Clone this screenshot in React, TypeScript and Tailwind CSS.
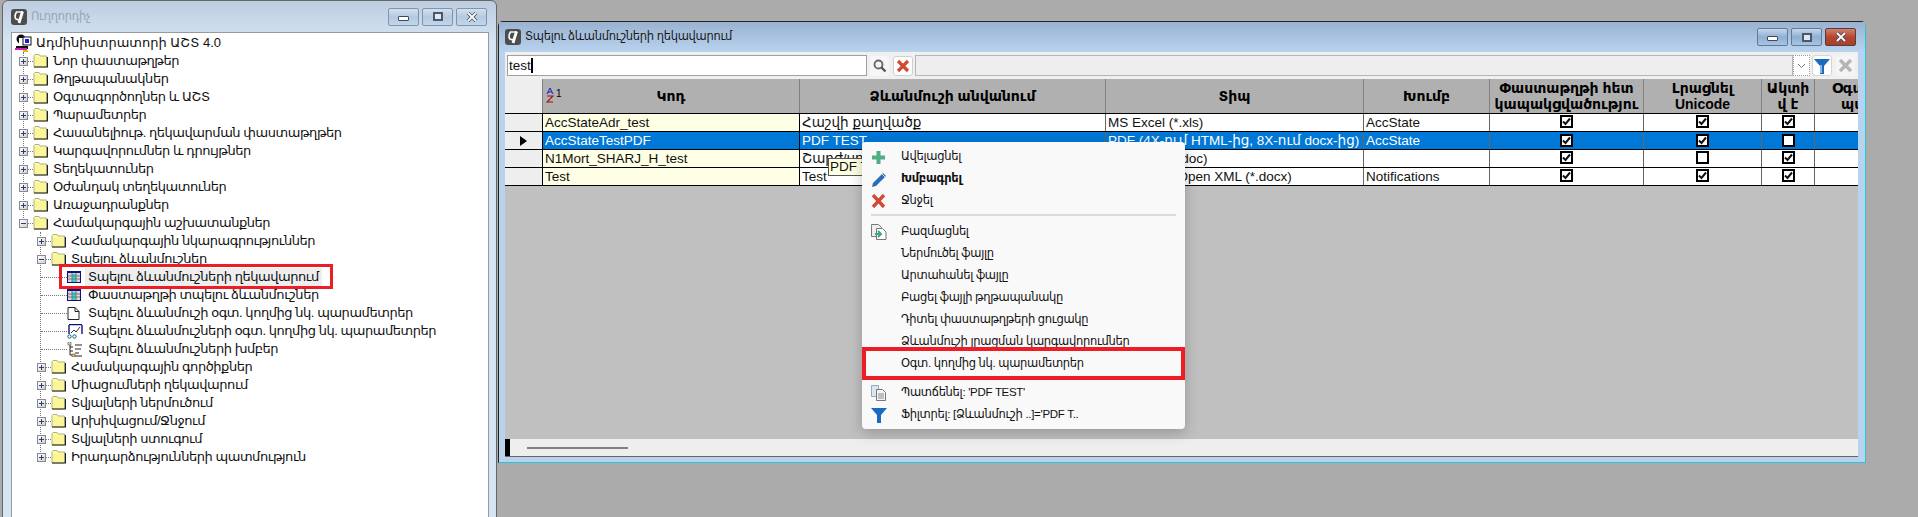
import React from 'react';

const Logo = () => (
  <svg width="16" height="16" viewBox="0 0 16 16" className="shrink-0">
    <rect width="16" height="16" rx="3" fill="#4d4d4d" />
    <path d="M5.500 3C3 7 3.500 11.500 8 10.500" stroke="#fff" strokeWidth="1.6" fill="none" />
    <path d="M5 3h7" stroke="#fff" strokeWidth="1.4" />
    <path d="M11.500 2.500L8 14" stroke="#fff" strokeWidth="2.8" />
  </svg>
);

const WinButtons = ({ active }: { active?: boolean }) => (
  <div className="flex gap-[3px]">
    {['min', 'max', 'close'].map((b) => (
      <div
        key={b}
        className={
          'w-[31px] h-[18px] rounded-[2px] border flex items-center justify-center ' +
          (active && b === 'close'
            ? 'border-[#5a3a3a] bg-gradient-to-b from-[#cf7f70] via-[#b8452f] to-[#a8402c]'
            : active
              ? 'border-[#5f7a9a] bg-gradient-to-b from-[#c6d8ec] via-[#8fb0d2] to-[#a8c4e2]'
              : 'border-[#8094ac] bg-gradient-to-b from-[#d4e0ee] via-[#b4c9e0] to-[#c2d6ea]')
        }
      >
        {b === 'min' && <div className="w-[11px] h-[5px] mt-[3px] border border-[#3c4a5c] bg-white rounded-[1px]" />}
        {b === 'max' && <div className="w-[10px] h-[9px] border-2 border-[#4a586a] bg-[#dfe8f2]" />}
        {b === 'close' && (
          <svg width="12" height="10" viewBox="0 0 12 10">
            <path d="M2 1l8 8M10 1l-8 8" stroke="#3c4a5c" strokeWidth="3.4" />
            <path d="M2 1l8 8M10 1l-8 8" stroke="#fff" strokeWidth="1.8" />
          </svg>
        )}
      </div>
    ))}
  </div>
);

const Folder = () => (
  <svg width="15" height="14" viewBox="0 0 15 14" className="shrink-0">
    <path d="M1 3V1.500L2 .5h4L7 2h6.500v11H1z" fill="#ffff99" stroke="#9a9a7a" strokeWidth="0.8" />
    <rect x="2" y="3" width="11" height="9" fill="#fdf59a" />
    <path d="M1 13h13.500V3" fill="none" stroke="#222" strokeWidth="1.2" />
  </svg>
);

const Expander = ({ open }: { open?: boolean }) => (
  <div className="w-[9px] h-[9px] shrink-0 border border-[#8a8a8a] bg-gradient-to-br from-white to-[#d0d0d0] flex items-center justify-center relative">
    <div className="w-[5px] h-px bg-[#25407a]" />
    {!open && <div className="absolute w-px h-[5px] bg-[#25407a]" />}
  </div>
);

const TableIcon = () => (
  <svg width="14" height="12" viewBox="0 0 14 12" className="shrink-0">
    <rect width="14" height="12" fill="#10107c" />
    <rect x="1" y="2" width="12" height="9" fill="#d8d8d8" />
    <rect x="5" y="3" width="4" height="8" fill="#22dede" />
    <path d="M1 5h12M1 8h12M5 2v9M9 2v9" stroke="#777" strokeWidth="1" />
  </svg>
);

const DocIcon = () => (
  <svg width="13" height="13" viewBox="0 0 13 13" className="shrink-0">
    <path d="M1 .5h7l4 4v8H1zM8 .5v4h4" fill="#fff" stroke="#222" />
  </svg>
);

const ChartIcon = () => (
  <svg width="16" height="15" viewBox="0 0 16 15" className="shrink-0">
    <path d="M2 .5h13M2 1v9M15 1v9" stroke="#10107c" strokeWidth="1.4" fill="none" />
    <path d="M4 9l3-3 2 2 4-5" stroke="#333" fill="none" />
    <circle cx="2.500" cy="12.500" r="1.700" fill="#fff" stroke="#167" />
    <circle cx="7.500" cy="12.500" r="1.700" fill="#fff" stroke="#167" />
  </svg>
);

const ListIcon = () => (
  <svg width="16" height="15" viewBox="0 0 16 15" className="shrink-0">
    <path d="M3 1v12M3 5h3M3 9h3M3 13h3M8 3h7M8 7h6M8 11h4M8 14h7" stroke="#222" fill="none" />
    <rect x="1" y="0" width="3" height="3" fill="#e8d98a" stroke="#555" strokeWidth="0.6" />
    <rect x="5" y="12" width="3" height="3" fill="#e8c020" stroke="#555" strokeWidth="0.6" />
  </svg>
);

const RootIcon = () => (
  <svg width="17" height="18" viewBox="0 0 17 18" className="shrink-0">
    <circle cx="6" cy="5" r="4.500" fill="#111" />
    <rect x="4" y="4" width="5" height="7" fill="#fff" />
    <rect x="8" y="3" width="8" height="8" fill="#fff" stroke="#111" />
    <rect x="10" y="5" width="4" height="4" fill="#1a1ae0" />
    <rect x="1" y="12" width="12" height="3" fill="#111" />
    <rect x="0" y="14" width="12" height="2" fill="#d020c0" />
    <rect x="8" y="16" width="5" height="2" fill="#e0c000" />
  </svg>
);

type TreeRow = { label: string; level: 1 | 2 | 3; open?: boolean; icon?: React.ReactNode; selected?: boolean };

const treeRows: TreeRow[] = [
  { label: 'Նոր փաստաթղթեր', level: 1 },
  { label: 'Թղթապանակներ', level: 1 },
  { label: 'Օգտագործողներ և ԱՇՏ', level: 1 },
  { label: 'Պարամետրեր', level: 1 },
  { label: 'Հասանելիութ. ղեկավարման փաստաթղթեր', level: 1 },
  { label: 'Կարգավորումներ և դրույթներ', level: 1 },
  { label: 'Տեղեկատուներ', level: 1 },
  { label: 'Օժանդակ տեղեկատուներ', level: 1 },
  { label: 'Առաջադրանքներ', level: 1 },
  { label: 'Համակարգային աշխատանքներ', level: 1, open: true },
  { label: 'Համակարգային նկարագրություններ', level: 2 },
  { label: 'Տպելու ձևանմուշներ', level: 2, open: true },
  { label: 'Տպելու ձևանմուշների ղեկավարում', level: 3, icon: <TableIcon />, selected: true },
  { label: 'Փաստաթղթի տպելու ձևանմուշներ', level: 3, icon: <TableIcon /> },
  { label: 'Տպելու ձևանմուշի օգտ. կողմից նկ. պարամետրեր', level: 3, icon: <DocIcon /> },
  { label: 'Տպելու ձևանմուշների օգտ. կողմից նկ. պարամետրեր', level: 3, icon: <ChartIcon /> },
  { label: 'Տպելու ձևանմուշների խմբեր', level: 3, icon: <ListIcon /> },
  { label: 'Համակարգային գործիքներ', level: 2 },
  { label: 'Միացումների ղեկավարում', level: 2 },
  { label: 'Տվյալների ներմուծում', level: 2 },
  { label: 'Արխիվացում/Ջնջում', level: 2 },
  { label: 'Տվյալների ստուգում', level: 2 },
  { label: 'Իրադարձությունների պատմություն', level: 2 },
];

const Tree = () => (
  <div className="relative h-full pt-px text-[13px] leading-[18px] text-[#111] tracking-[-0.45px]">
    <div className="absolute left-[11px] top-[19px] h-[172px] border-l border-dotted border-[#777]" />
    <div className="absolute left-[28px] top-[199px] h-[226px] border-l border-dotted border-[#777]" />
    <div className="flex items-center h-[18px] pl-[3px] gap-[4px]">
      <RootIcon />
      <span className="tracking-normal">Ադմինիստրատորի ԱՇՏ 4.0</span>
    </div>
    {treeRows.map((r) => (
      <div
        key={r.label}
        className={
          'relative flex items-center h-[18px] whitespace-nowrap ' +
          (r.level === 1 ? 'pl-[7px]' : r.level === 2 ? 'pl-[25px]' : 'pl-[29px]')
        }
      >
        {r.level < 3 ? (
          <>
            <Expander open={r.open} />
            <div className="w-[5px] shrink-0 border-t border-dotted border-[#777]" />
            <Folder />
            <span className="ml-[5px]">{r.label}</span>
          </>
        ) : (
          <>
            <div className="w-[26px] shrink-0 border-t border-dotted border-[#777]" />
            <div className="w-[16px] shrink-0 flex justify-start">{r.icon}</div>
            <span className={'ml-[2px] px-[3px] ' + (r.selected ? 'bg-[#eeeeee]' : '')}>{r.label}</span>
          </>
        )}
      </div>
    ))}
  </div>
);

const Check = ({ on, up }: { on: boolean; up?: boolean }) => (
  <div
    className={
      'w-[13px] h-[13px] border-2 border-black bg-white flex items-center justify-center ' +
      (up ? '-mt-[3px]' : '')
    }
  >
    {on && (
      <svg width="9" height="9" viewBox="0 0 9 9">
        <path d="M1 4.500l2.500 2.500L8 1.500" stroke="#111" strokeWidth="2" fill="none" />
      </svg>
    )}
  </div>
);

const gridCols = 'grid grid-cols-[38px_257px_306px_258px_126px_154px_118px_53px_43px]';

const rows = [
  { code: 'AccStateAdr_test', name: 'Հաշվի քաղվածք', type: 'MS Excel (*.xls)', group: 'AccState', c: [true, true, true] },
  { code: 'AccStateTestPDF', name: 'PDF TEST', type: 'PDF (4X-ում HTML-ից, 8X-ում docx-ից)', group: 'AccState', c: [true, true, false], sel: true },
  { code: 'N1Mort_SHARJ_H_test', name: 'Շարժ/սրթ հաշվետվություն', type: 'MS Word (*.doc)', group: '', c: [true, false, true] },
  { code: 'Test', name: 'Test', type: 'Word 2007 Open XML (*.docx)', group: 'Notifications', c: [true, true, true] },
];

const headCell =
  'border-r border-[#808080] bg-[#b0b0b0] flex items-center justify-center text-center font-bold leading-[16px] overflow-hidden whitespace-nowrap text-black';

const Grid = () => (
  <div className="text-[13.500px] text-[#111] w-[1353px]">
    <div className={gridCols + ' h-[35px] border-b border-black text-[14px]'}>
      <div className="bg-[#eeeeee] border-r border-[#808080]" />
      <div className={headCell + ' relative'}>
        <div className="absolute left-[3px] top-[8px] flex items-start">
          <svg width="8" height="16" viewBox="0 0 8 16">
            <path d="M1 7l3-6 3 6M2 5h4" stroke="#1a1ad0" fill="none" />
            <path d="M1 9h6l-6 6h6" stroke="#a01010" fill="none" strokeWidth="1.2" />
          </svg>
          <span className="ml-[2px] text-[10px] font-normal leading-[14px]">1</span>
        </div>
        Կոդ
      </div>
      <div className={headCell}>Ձևանմուշի անվանում</div>
      <div className={headCell}>Տիպ</div>
      <div className={headCell}>Խումբ</div>
      <div className={headCell}>Փաստաթղթի հետ<br />կապակցվածությու</div>
      <div className={headCell}>Լրացնել<br />Unicode</div>
      <div className={headCell}>Ակտի<br />վ է</div>
      <div className="bg-[#b0b0b0] font-bold leading-[16px] overflow-hidden whitespace-nowrap pl-[17px] pt-px text-black">
        Օգտ. կող<br /><span className="pl-[9px]">պար</span>
      </div>
    </div>
    {rows.map((r, i) => {
      const cell =
        'px-[2px] border-r border-[#666666] overflow-hidden whitespace-nowrap leading-[17px] ' +
        (r.sel ? 'bg-[#0078d7] text-white ' : 'bg-white ');
      return (
        <div key={r.code} className={gridCols + ' h-[18px] border-b border-black'}>
          <div className="bg-[#eeeeee] border-r border-black flex items-center justify-center">
            {r.sel && <div className="w-0 h-0 border-y-[5px] border-y-transparent border-l-[7px] border-l-black" />}
          </div>
          <div className={'px-[2px] border-r border-black leading-[17px] ' + (r.sel ? 'bg-[#0078d7] text-white' : 'bg-[#ffffe5]')}>
            {r.code}
          </div>
          <div className={cell}>{r.name}</div>
          <div className={cell}>{r.type}</div>
          <div className={cell}>{r.group}</div>
          {r.c.map((on, k) => (
            <div key={k} className={cell + 'flex items-center justify-center'}>
              <Check on={on} up={i !== 1} />
            </div>
          ))}
          <div className={r.sel ? 'bg-[#0078d7]' : 'bg-white'} />
        </div>
      );
    })}
  </div>
);

const Toolbar = () => (
  <div className="flex items-center h-[27px] bg-[#f0f0f0] pl-[2px]">
    <div className="w-[360px] h-[21px] bg-white border border-[#a0a0a0] text-[13.500px] leading-[19px] pl-[1px] flex items-center text-[#111]">
      test<div className="w-[2px] h-[15px] bg-black" />
    </div>
    <div className="ml-[3px] w-[19px] h-[20px] bg-[#f6f6f6] rounded-[3px] flex items-center justify-center">
      <svg width="14" height="14" viewBox="0 0 14 14">
        <circle cx="5.500" cy="5.500" r="4" fill="none" stroke="#666" strokeWidth="1.8" />
        <path d="M8.500 8.500l4 4" stroke="#555" strokeWidth="2.4" />
      </svg>
    </div>
    <div className="ml-[4px] w-[20px] h-[20px] bg-white border border-[#cfcfcf] rounded-[3px] flex items-center justify-center">
      <svg width="14" height="14" viewBox="0 0 14 14">
        <path d="M2 2l10 10M12 2L2 12" stroke="#d24a32" strokeWidth="3.2" />
      </svg>
    </div>
    <div className="ml-[2px] w-[878px] h-[21px] bg-[#eeeeee] border border-[#b5b5b5]" />
    <div className="w-[17px] h-[21px] bg-white border border-dotted border-[#999] flex items-center justify-center">
      <svg width="9" height="6" viewBox="0 0 9 6">
        <path d="M1 1l3.500 3.500L8 1" stroke="#777" fill="none" />
      </svg>
    </div>
    <div className="ml-[2px] w-[20px] h-[21px] bg-white border border-[#d5d5d5] rounded-[3px] flex items-center justify-center">
      <svg width="16" height="16" viewBox="0 0 16 16">
        <path d="M0 1h16L10 8v8H6V8z" fill="#1a6bc0" />
        <path d="M7 7v8" stroke="#fff" strokeWidth="1" />
      </svg>
    </div>
    <div className="ml-[3px] w-[20px] h-[21px] bg-[#f4f4f4] rounded-[3px] flex items-center justify-center">
      <svg width="15" height="15" viewBox="0 0 15 15">
        <path d="M2 2l11 11M13 2L2 13" stroke="#b5b5b5" strokeWidth="3.4" />
      </svg>
    </div>
  </div>
);

const menuGreenPlus = (
  <svg width="15" height="15" viewBox="0 0 15 15">
    <path d="M7.500 1v13M1 7.500h13" stroke="#4fae84" strokeWidth="4" />
  </svg>
);
const menuPencil = (
  <svg width="17" height="17" viewBox="0 0 17 17">
    <path d="M1 16l1-4L12 2l3 3L5 15z" fill="#2a6ebb" />
    <path d="M11 3l3 3" stroke="#fff" strokeWidth="0.8" />
  </svg>
);
const menuX = (
  <svg width="15" height="14" viewBox="0 0 15 14">
    <path d="M2 1l11 12M13 1L2 13" stroke="#cf4a35" strokeWidth="3.4" />
  </svg>
);
const menuDup = (
  <svg width="16" height="16" viewBox="0 0 16 16">
    <path d="M.5 2.500V.5h7l3 3v9H.5z" fill="#eee" stroke="#777" />
    <path d="M5.500 4.500h6l3.500 3.500v7.500h-9.500z" fill="#fff" stroke="#777" />
    <path d="M4 10h5M7 7l3 3-3 3" stroke="#3fa878" strokeWidth="2" fill="none" />
  </svg>
);
const menuCopy = (
  <svg width="16" height="16" viewBox="0 0 16 16">
    <path d="M.5.5h7v11h-7z" fill="#dbe6f2" stroke="#9aa8b8" />
    <path d="M5.500 4.500h6l3 3v8h-9z" fill="#f4f4f4" stroke="#777" />
    <path d="M7 9h6M7 11h6M7 13h6" stroke="#8a8a8a" />
  </svg>
);
const menuFilter = (
  <svg width="16" height="16" viewBox="0 0 16 16">
    <path d="M0 1h16L10 8v8H6V8z" fill="#1a6bc0" />
  </svg>
);

type MenuItem = { label?: string; icon?: React.ReactNode; bold?: boolean; sep?: 'line' | 'gap' };

const menuItems: MenuItem[] = [
  { label: 'Ավելացնել', icon: menuGreenPlus },
  { label: 'Խմբագրել', icon: menuPencil, bold: true },
  { label: 'Ջնջել', icon: menuX },
  { sep: 'line' },
  { label: 'Բազմացնել', icon: menuDup },
  { label: 'Ներմուծել ֆայլը' },
  { label: 'Արտահանել ֆայլը' },
  { label: 'Բացել ֆայլի թղթապանակը' },
  { label: 'Դիտել փաստաթղթերի ցուցակը' },
  { label: 'Ձևանմուշի լրացման կարգավորումներ' },
  { label: 'Օգտ. կողմից նկ. պարամետրեր' },
  { sep: 'gap' },
  { label: 'Պատճենել: \'PDF TEST\'', icon: menuCopy },
  { label: 'Ֆիլտրել: [Ձևանմուշի ..]=\'PDF T..', icon: menuFilter },
];

const ContextMenu = () => (
  <div className="absolute left-[862px] top-[142px] w-[323px] h-[287px] bg-[#f9f9f9] rounded-[4px] shadow-[0_4px_14px_rgba(0,0,0,0.22)] pt-[4px] text-[11.500px] tracking-[-0.3px] text-[#111] z-20">
    {menuItems.map((m, i) =>
      m.sep ? (
        <div key={i} className={m.sep === 'line' ? 'h-[9px] px-[8px] pt-[2px]' : 'h-[7px]'}>
          {m.sep === 'line' && <div className="h-[2px] bg-[#dcdcdc] mx-[1px]" />}
        </div>
      ) : (
        <div key={i} className="flex items-center h-[22px]">
          <div className="w-[39px] pl-[9px] shrink-0 flex justify-start">{m.icon}</div>
          <span className={m.bold ? 'font-bold' : ''}>{m.label}</span>
        </div>
      ),
    )}
  </div>
);

export default function App() {
  return (
    <div className="relative w-[1918px] h-[517px] overflow-hidden bg-[#ababab] font-['Liberation_Sans','DejaVu_Sans',sans-serif]">
      {/* Left window */}
      <div className="absolute left-[2px] top-0 w-[495px] h-[530px] rounded-t-[6px] border border-[#666] bg-gradient-to-b from-[#bdcde0] to-[#d6e5f4] to-[8%] flex flex-col pl-[8px] pr-[7px]">
        <div className="h-[31px] shrink-0 flex items-center justify-between pr-[2px]">
          <div className="flex items-center gap-[4px]">
            <Logo />
            <span className="text-[11.500px] tracking-[-0.3px] text-[#98a6b4]">Ուղղորդիչ</span>
          </div>
          <WinButtons />
        </div>
        <div className="flex-1 bg-white border border-[#9a9a9a]">
          <Tree />
        </div>
      </div>

      {/* Right window */}
      <div className="absolute left-[498px] top-[21px] w-[1368px] h-[442px] rounded-t-[5px] border border-[#222] border-r-[#22c8d8] border-b-[#22c8d8] bg-[#b9d3ef] flex flex-col pl-[6px] pr-[7px]">
        <div className="-mx-[6px] px-[6px] -mr-[7px] pr-[9px] h-[30px] shrink-0 flex items-center justify-between bg-gradient-to-b from-[#98b2d0] to-[#b9d3ef]">
          <div className="flex items-center gap-[4px]">
            <Logo />
            <span className="text-[11.500px] tracking-[-0.3px] text-[#1a1a1a]">Տպելու ձևանմուշների ղեկավարում</span>
          </div>
          <WinButtons active />
        </div>
        <div className="flex-1 flex flex-col bg-[#c0c0c0] border-b border-[#666] mb-[5px] overflow-hidden">
          <Toolbar />
          <Grid />
          <div className="flex-1" />
          <div className="h-[17px] bg-[#eeeeee] flex items-center">
            <div className="w-[5px] h-full bg-black" />
            <div className="ml-[17px] w-[101px] h-[2px] bg-[#808080]" />
          </div>
        </div>
      </div>

      {/* Tooltip under the menu */}
      <div className="absolute left-[828px] top-[158px] w-[60px] h-[18px] bg-[#ffffe1] border border-[#555] text-[13.500px] leading-[16px] pl-[1px] text-[#111] whitespace-nowrap overflow-hidden z-10">
        PDF TEST
      </div>

      <ContextMenu />

      {/* Red highlight frames */}
      <div className="absolute left-[59px] top-[264px] w-[274px] h-[25px] border-[3px] border-[#ee1c25] z-30" />
      <div className="absolute left-[862px] top-[347px] w-[323px] h-[33px] border-[4px] border-[#ee1c25] z-30" />
    </div>
  );
}
